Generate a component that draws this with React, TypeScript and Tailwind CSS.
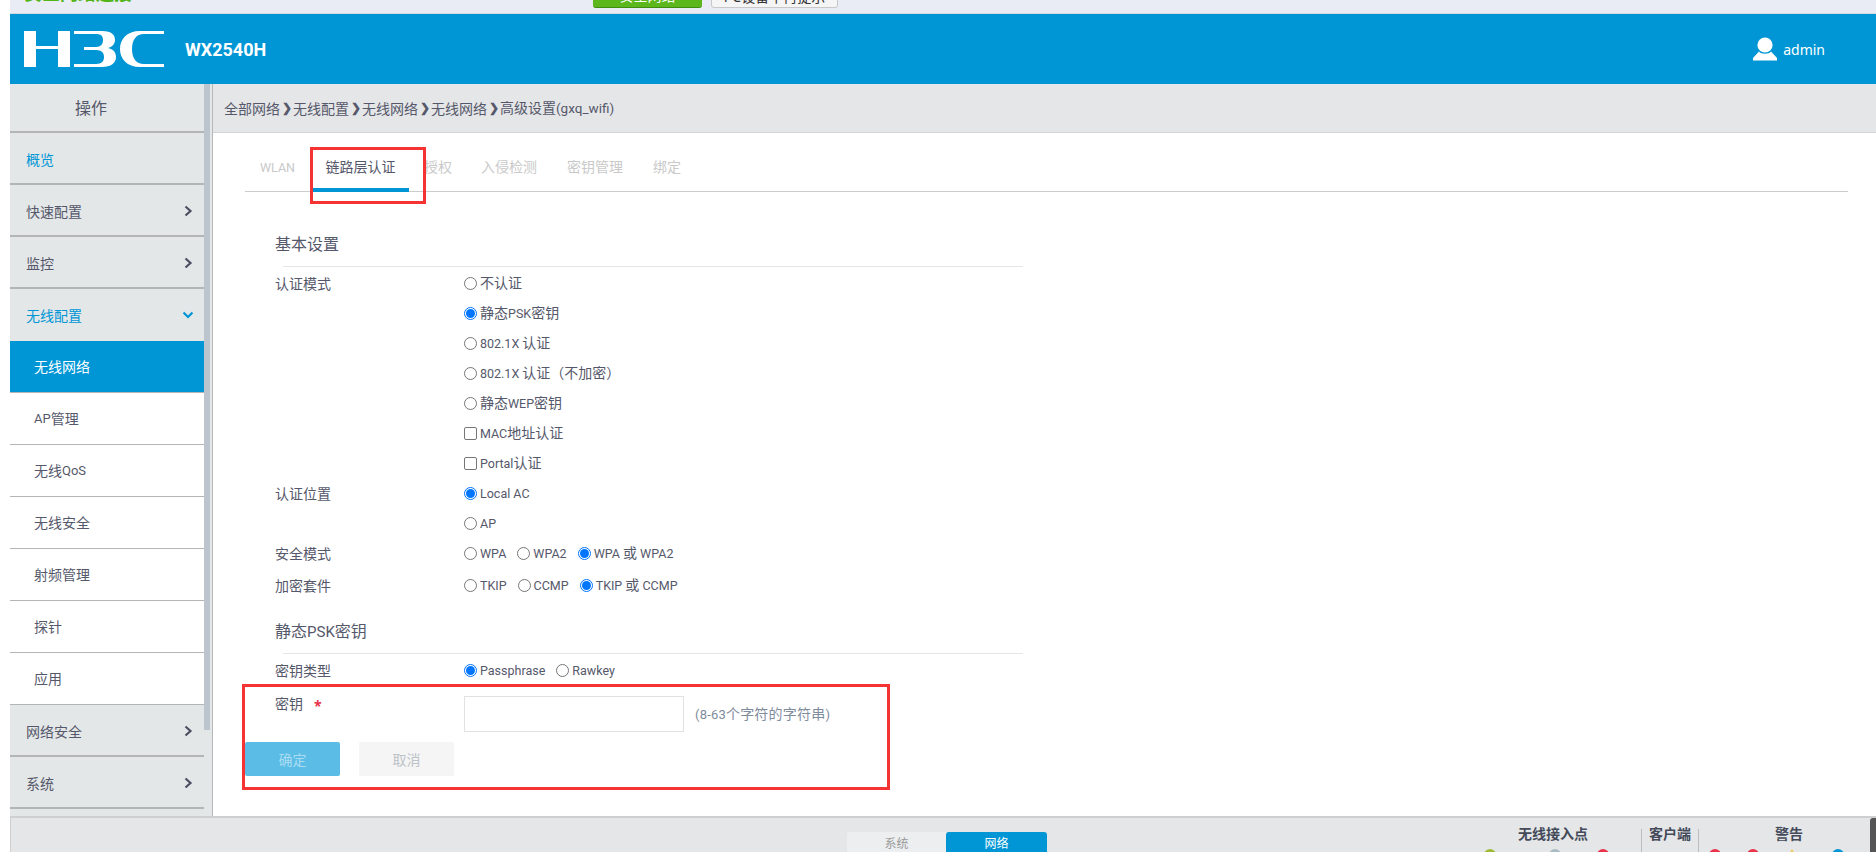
const cjk = { fontFamily: '"Noto Sans", "Noto Sans CJK SC", sans-serif' };
const rob = { fontFamily: '"Roboto", "Noto Sans CJK SC", sans-serif' };

function T({ s, latin = "text-[12.5px]" }: { s: string; latin?: string }) {
  const parts = s.split(/([\x20-\x7e]+)/).filter(Boolean);
  return (
    <>
      {parts.map((p, i) =>
        /^[\x20-\x7e]+$/.test(p) ? (
          <span key={i} className={`${latin} whitespace-pre`} style={rob}>{p}</span>
        ) : (
          <span key={i}>{p}</span>
        )
      )}
    </>
  );
}

function Chevron({ open = false }: { open?: boolean }) {
  return (
    <svg width="10" height="12" viewBox="0 0 10 12" className="shrink-0">
      {open ? (
        <path d="M0.5 3.5 L5 8 L9.5 3.5" fill="none" stroke="#0096d6" strokeWidth="2.2" />
      ) : (
        <path d="M2.5 1.5 L7.5 6 L2.5 10.5" fill="none" stroke="#4b4f63" strokeWidth="2.2" />
      )}
    </svg>
  );
}

function MenuItem({ label, color = "text-[#55586a]", chevron }: { label: string; color?: string; chevron?: boolean }) {
  return (
    <div className={`h-[52px] pt-[2px] flex items-center justify-between pl-4 pr-[11px] border-b-2 border-[#b3b5b7] text-[14px] ${color}`}>
      <span>{label}</span>
      {chevron && <Chevron />}
    </div>
  );
}

function SubItem({ label, active }: { label: string; active?: boolean }) {
  return (
    <div className={`h-[52px] flex items-center pl-6 border-b border-[#b3b5b7] text-[14px] ${active ? "bg-[#0096d6] text-white" : "bg-white text-[#55586a]"}`}>
      <T s={label} latin="text-[13px]" />
    </div>
  );
}

function Radio({ checked }: { checked?: boolean }) {
  return (
    <span className={`w-[13px] h-[13px] rounded-full border flex items-center justify-center shrink-0 bg-white ${checked ? "border-[#0075ff]" : "border-[#767676]"}`}>
      {checked && <span className="w-[9px] h-[9px] rounded-full bg-[#0075ff]" />}
    </span>
  );
}

function Opt({ label, checked, box, className = "" }: { label: string; checked?: boolean; box?: boolean; className?: string }) {
  return (
    <span className={`flex items-center gap-[3px] ${className}`}>
      {box ? <span className="w-[13px] h-[13px] rounded-[2px] border border-[#767676] bg-white shrink-0" /> : <Radio checked={checked} />}
      <span className="pb-px"><T s={label} /></span>
    </span>
  );
}

function Row({ label, h = "h-[30px]", children }: { label?: string; h?: string; children: React.ReactNode }) {
  return (
    <div className={`flex items-center ${h}`}>
      <span className="w-[189px] shrink-0 text-[#55586a]">{label}</span>
      <div className="flex items-center text-[#55586a]">{children}</div>
    </div>
  );
}

function Section({ title }: { title: string }) {
  return (
    <div className="h-[34px] flex flex-col mb-px">
      <div className="flex-1 text-[16px] leading-[22px] text-[#55586a]"><T s={title} latin="text-[15px]" /></div>
      <div className="ml-2 w-[740px] h-px bg-[#e6e6e6]" />
    </div>
  );
}

function H3C() {
  return (
    <svg width="140" height="36" viewBox="0 0 140 36" fill="#fff" className="shrink-0">
      <path d="M0 0H12V15H34V0H46V36H34V18H12V36H0Z" />
      <path d="M50 0H78C88 0 91 4 91 9C91 13 88 16 84 17C89 18 92 21 92 26C92 32 87 36 78 36H50V33H72C78 33 80 30 80 26C80 22 78 19 72 19H60V16H72C77 16 79 13 79 9C79 5 77 3 72 3H50Z" />
      <path d="M140 0H116C103 0 96 8 96 18C96 28 103 36 116 36H140V33H120C112 33 108 27 108 18C108 9 112 3 120 3H140Z" />
    </svg>
  );
}

function Dot({ color, x }: { color: string; x: number }) {
  return <span className="absolute top-[31px] w-[12px] h-[12px] rounded-full" style={{ background: color, left: x }} />;
}

function Sep() {
  return <span className="font-bold mx-[1.5px] text-[12px]">❯</span>;
}

export default function App() {
  return (
    <div className="relative w-[1876px] h-[852px] overflow-hidden bg-white flex flex-col pl-[10px] text-[14px]" style={cjk}>
      <div className="h-[14px] shrink-0 bg-[#e9ecf4] border-b border-[#d4d8e4] relative overflow-hidden">
        <span className="absolute left-[14px] -top-[20px] text-[18px] font-bold text-[#52b415]">安全网络连接</span>
        <span className="absolute left-[583px] -top-[14px] w-[109px] h-[22px] bg-[#5bb71b] rounded-[3px] border-b border-[#3f8f0f] flex items-center justify-center text-white text-[14px] pb-[2px]">安全网络</span>
        <span className="absolute left-[701px] -top-[14px] w-[127px] h-[22px] bg-[#f5f5f5] border border-[#c8c8c8] rounded-[3px] flex items-center justify-center text-[#333] text-[14px] pb-[2px]">PC设备不再提示</span>
      </div>

      <header className="h-[70px] shrink-0 bg-[#0096d6] flex items-center pl-[14px] pr-[51px] text-white">
        <H3C />
        <span className="ml-[21px] text-[18px] font-bold" style={{ fontFamily: '"Roboto", sans-serif' }}>WX2540H</span>
        <span className="ml-auto flex items-center gap-[6px]">
          <svg width="24" height="24" viewBox="0 0 24 24" fill="#fff">
            <circle cx="12" cy="8" r="7.6" />
            <path d="M6 14.5C8 17.5 16 17.5 18 14.5L24 21C24 22.5 24 23.5 24 23.5H0C0 23.5 0 22.5 0 21Z" />
          </svg>
          <span className="text-[14px]">admin</span>
        </span>
      </header>

      <div className="flex-1 min-h-0 flex">
        <aside className="w-[203px] shrink-0 bg-[#e4e7e8] flex border-r border-[#b8b8b8]">
          <div className="w-[194px] shrink-0 flex flex-col">
            <div className="h-[49px] shrink-0 flex items-center justify-center pr-8 border-b-2 border-[#b3b5b7] text-[16px] text-[#55586a]">操作</div>
            <MenuItem label="概览" color="text-[#0096d6]" />
            <MenuItem label="快速配置" chevron />
            <MenuItem label="监控" chevron />
            <div className="h-[52px] flex items-center justify-between pl-4 pr-[11px] text-[14px] text-[#0096d6]">
              <span>无线配置</span>
              <Chevron open />
            </div>
            <SubItem label="无线网络" active />
            <SubItem label="AP管理" />
            <SubItem label="无线QoS" />
            <SubItem label="无线安全" />
            <SubItem label="射频管理" />
            <SubItem label="探针" />
            <SubItem label="应用" />
            <MenuItem label="网络安全" chevron />
            <MenuItem label="系统" chevron />
          </div>
          <div className="w-[6px] shrink-0 h-[646px] bg-[#bcc5cd]" />
        </aside>

        <main className="flex-1 min-w-0 flex flex-col">
          <div className="h-[49px] shrink-0 bg-[#e5e6e8] border-b border-[#d4d4d4] flex items-center pl-[11px] text-[14px] text-[#55586a]">
            <span>全部网络</span><Sep />
            <span>无线配置</span><Sep />
            <span>无线网络</span><Sep />
            <span>无线网络</span><Sep />
            <span><T s="高级设置(gxq_wifi)" latin="text-[13.5px]" /></span>
          </div>

          <div className="ml-[32px] mr-[28px] mt-[21px] h-[38px] flex border-b border-[#cccccc] text-[14px] text-[#c9c9c9]">
            <span className="w-[67px] pl-[15px] pt-[2px]"><T s="WLAN" /></span>
            <span className="w-[97px] h-[38px] text-center pt-[2px] text-[#55586a] border-b-4 border-[#0096d6]">链路层认证</span>
            <span className="w-[48px] pl-[15px] pt-[2px]">授权</span>
            <span className="ml-[24px] w-[86px] pt-[2px]">入侵检测</span>
            <span className="w-[86px] pt-[2px]">密钥管理</span>
            <span className="pt-[2px]">绑定</span>
          </div>

          <div className="ml-[62px] mt-[41px]">
            <Section title="基本设置" />
            <Row label="认证模式"><Opt label="不认证" /></Row>
            <Row><Opt label="静态PSK密钥" checked /></Row>
            <Row><Opt label="802.1X 认证" /></Row>
            <Row><Opt label="802.1X 认证（不加密）" /></Row>
            <Row><Opt label="静态WEP密钥" /></Row>
            <Row><Opt label="MAC地址认证" box /></Row>
            <Row><Opt label="Portal认证" box /></Row>
            <Row label="认证位置"><Opt label="Local AC" checked /></Row>
            <Row><Opt label="AP" /></Row>
            <Row label="安全模式">
              <Opt label="WPA" /><Opt label="WPA2" className="ml-[11px]" /><Opt label="WPA 或 WPA2" checked className="ml-[11px]" />
            </Row>
            <Row label="加密套件" h="h-[34px]">
              <Opt label="TKIP" /><Opt label="CCMP" className="ml-[11px]" /><Opt label="TKIP 或 CCMP" checked className="ml-[11px]" />
            </Row>
            <div className="mt-[18px]"><Section title="静态PSK密钥" /></div>
            <Row label="密钥类型">
              <Opt label="Passphrase" checked /><Opt label="Rawkey" className="ml-[11px]" />
            </Row>
            <div className="flex items-start h-[46px] mt-[11px]">
              <span className="w-[189px] shrink-0 text-[#55586a] flex items-start gap-[11px] leading-[16px]">
                <span>密钥</span><span className="text-[#e8334a] text-[14px] font-bold leading-[20px]">*</span>
              </span>
              <div className="w-[220px] h-[36px] border border-[#e2e2e2] bg-white shrink-0" />
              <span className="ml-[11px] mt-[7px] text-[#7f8c9d] tracking-[0.2px]"><T s="(8-63个字符的字符串)" latin="text-[13px]" /></span>
            </div>
            <div className="flex -ml-[30px] gap-[19px]">
              <span className="w-[95px] h-[34px] rounded-[2px] bg-[#5bbce6] text-[#a9dcf2] flex items-center justify-center text-[14px]">确定</span>
              <span className="w-[95px] h-[34px] rounded-[2px] bg-[#f5f5f5] text-[#bcc3c9] flex items-center justify-center text-[14px]">取消</span>
            </div>
          </div>
        </main>
      </div>

      <footer className="absolute left-[10px] right-0 bottom-0 h-[36px] bg-[#e5e6e8] border-t-2 border-l border-[#cfcfcf] overflow-hidden">
        <div className="absolute left-[836px] top-[14px] w-[99px] h-[24px] bg-[#eceef0] rounded-tl-[3px] text-[#9a9a9a] flex justify-center pt-[3px] text-[12px]">系统</div>
        <div className="absolute left-[935px] top-[14px] w-[101px] h-[24px] bg-[#0096d6] rounded-t-[3px] text-white flex justify-center pt-[3px] text-[12px]">网络</div>
        <span className="absolute left-[1507px] top-[5px] text-[#444a5a] font-bold text-[14px]">无线接入点</span>
        <span className="absolute left-[1630px] top-[11px] w-px h-[24px] bg-[#bcbcbc]" />
        <span className="absolute left-[1638px] top-[5px] text-[#444a5a] font-bold text-[14px]">客户端</span>
        <span className="absolute left-[1687px] top-[11px] w-px h-[24px] bg-[#bcbcbc]" />
        <span className="absolute left-[1764px] top-[5px] text-[#444a5a] font-bold text-[14px]">警告</span>
        <Dot color="#9dbb35" x={1473} />
        <Dot color="#a9bcc4" x={1538} />
        <Dot color="#e8334a" x={1586} />
        <Dot color="#e8334a" x={1698} />
        <Dot color="#e8334a" x={1736} />
        <svg width="12" height="12" viewBox="0 0 12 12" className="absolute left-[1775px] top-[31px]"><path d="M6 0L12 12H0Z" fill="#eec643" /></svg>
        <Dot color="#0096d6" x={1821} />
        <span className="absolute right-0 top-0 w-[6px] h-[34px] bg-[#555] rounded-tl-[3px]" />
      </footer>

      <div className="absolute left-[310px] top-[147px] w-[116px] h-[57px] border-[3px] border-[#f53333]" />
      <div className="absolute left-[242px] top-[684px] w-[648px] h-[106px] border-[3px] border-[#f53333]" />
    </div>
  );
}
